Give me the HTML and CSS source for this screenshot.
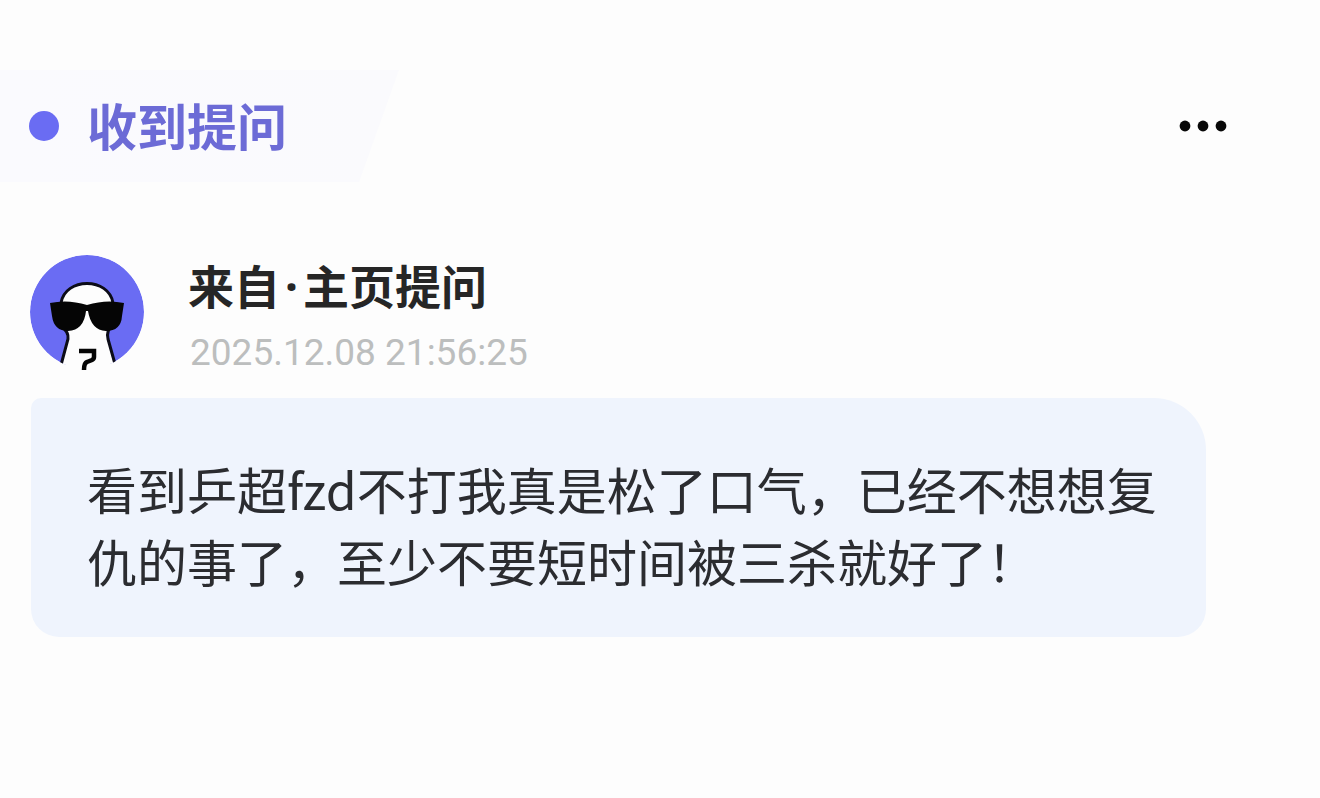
FILE: index.html
```html
<!DOCTYPE html>
<html lang="zh-CN">
<head>
<meta charset="utf-8">
<meta name="viewport" content="width=device-width, initial-scale=1">
<title>收到提问</title>
<link rel="stylesheet" href="styles.css">
</head>
<body>
<main class="card">
  <header class="topbar">
    <h1 class="tag"><span class="tag-dot"></span><span class="tag-label">收到提问</span></h1>
    <button class="more" type="button" aria-label="更多">
      <svg width="48" height="12" viewBox="0 0 48 12" aria-hidden="true">
        <circle cx="6" cy="6" r="5.4"/><circle cx="24" cy="6" r="5.4"/><circle cx="42" cy="6" r="5.4"/>
      </svg>
    </button>
  </header>
  <section class="sender">
    <svg class="avatar" viewBox="0 0 114 114" aria-hidden="true">
      <defs><clipPath id="round"><circle cx="57" cy="57" r="57"/></clipPath></defs>
      <g clip-path="url(#round)">
        <circle cx="57" cy="57" r="57" fill="#6a6cf3"/>
        <path d="M31 52C31 20 83 20 83 52L82 72Q77 78 78 86L86 118H29L37 86Q38 78 32 72Z" fill="#fdfdfd"/>
        <path d="M31 48C35 22 79 22 83 48M31 71Q39 77 38 84L31 110M82 71Q76 76 78 84L85 109" fill="none" stroke="#0c0c18" stroke-width="3"/>
      </g>
      <path d="M36 108Q57 117 80 108V116H36Z" fill="#fdfdfd"/>
      <path d="M20 48Q38 44 57 50Q76 44 94 48L92 61Q91 76 76 76Q61 75 58 56L56 56Q54 75 38 76Q24 76 22 61Z" fill="#050505"/>
      <path d="M49 96H64V102Q64 104 62 105L57 107Q54 108 54 115" fill="none" stroke="#050505" stroke-width="4.5"/>
    </svg>
    <div class="meta">
      <h2 class="name">来自<span class="sep">·</span>主页提问</h2>
      <time class="time" datetime="2025-12-08T21:56:25">2025.12.08 21:56:25</time>
    </div>
  </section>
  <p class="bubble">看到乒超fzd不打我真是松了口气，已经不想想复仇的事了，至少不要短时间被三杀就好了！</p>
</main>
</body>
</html>
```
FILE: styles.css
```css
* {
  box-sizing: border-box;
}

body {
  margin: 0;
  background: #fdfdfd;
  color: #2b2c30;
  font-family: "Noto Sans CJK SC", sans-serif;
}

.card {
  padding: 70px 0;
}

.topbar {
  display: flex;
  align-items: center;
  justify-content: space-between;
  padding-right: 87px;
}

.tag {
  display: flex;
  align-items: center;
  gap: 28px;
  margin: 0;
  padding: 20px 112px 20px 29px;
  background: linear-gradient(90deg, #fafafe, #fafafd);
  clip-path: polygon(0 0, 100% 0, 90% 100%, 0 100%);
  color: #6c6bd6;
  font-size: 50px;
  font-weight: 700;
  line-height: 68px;
}

.tag-label {
  padding-bottom: 4px;
}

.tag-dot {
  width: 30px;
  height: 30px;
  border-radius: 50%;
  background: #6a6cf3;
}

.more {
  display: flex;
  padding: 6px;
  border: 0;
  background: none;
  fill: #080808;
}

.sender {
  display: flex;
  gap: 44px;
  padding: 73px 30px 0;
}

.avatar {
  width: 114px;
  height: 114px;
  overflow: visible;
}

.name {
  margin: 0;
  color: #262626;
  font-size: 46px;
  font-weight: 700;
  line-height: 58px;
}

.sep {
  padding: 0 5px;
  font-family: "Noto Sans", sans-serif;
}

.time {
  display: block;
  padding-left: 2px;
  color: #bcbebe;
  font-family: Roboto, sans-serif;
  font-size: 37px;
  line-height: 76px;
}

.bubble {
  margin: 7px 114px 0 31px;
  padding: 54px 48px 41px 56px;
  border-radius: 10px 52px 28px 28px;
  background: #eff4fd;
  font-size: 50px;
  line-height: 72px;
}
```
